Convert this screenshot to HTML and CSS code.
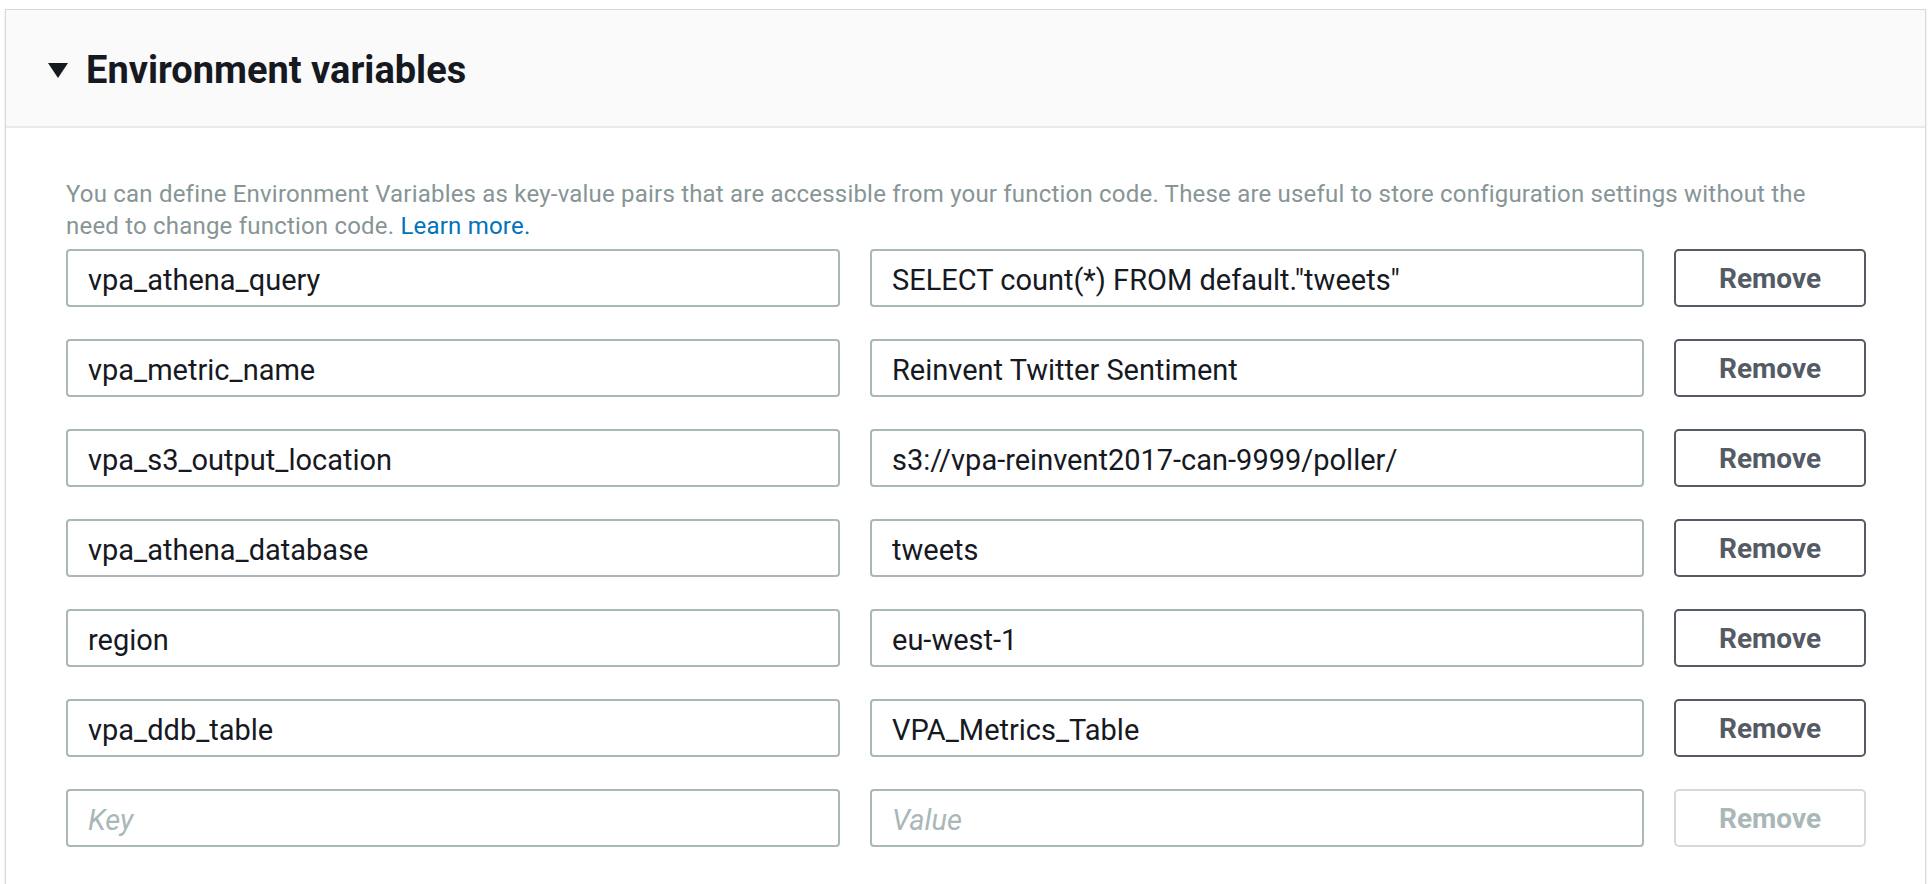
FILE: index.html
```html
<!DOCTYPE html>
<html lang="en">
<head>
<meta charset="utf-8">
<title>Environment variables</title>
<link rel="stylesheet" href="styles.css">
</head>
<body>
<section class="panel">
  <header class="panel-header">
    <svg class="caret" width="20" height="15" viewBox="0 0 20 15" aria-hidden="true"><polygon points="0,0 20,0 10,15" fill="#16191f"/></svg>
    <h2 class="panel-title">Environment variables</h2>
  </header>
  <div class="panel-body">
    <p class="desc">You can define Environment Variables as key-value pairs that are accessible from your function code. These are useful to store configuration settings without the need to change function code. <a href="#" class="link">Learn more.</a></p>
    <div class="rows">
      <div class="row">
        <input class="field" type="text" value="vpa_athena_query">
        <input class="field" type="text" value="SELECT count(*) FROM default.&quot;tweets&quot;">
        <button class="btn">Remove</button>
      </div>
      <div class="row">
        <input class="field" type="text" value="vpa_metric_name">
        <input class="field" type="text" value="Reinvent Twitter Sentiment">
        <button class="btn">Remove</button>
      </div>
      <div class="row">
        <input class="field" type="text" value="vpa_s3_output_location">
        <input class="field" type="text" value="s3://vpa-reinvent2017-can-9999/poller/">
        <button class="btn">Remove</button>
      </div>
      <div class="row">
        <input class="field" type="text" value="vpa_athena_database">
        <input class="field" type="text" value="tweets">
        <button class="btn">Remove</button>
      </div>
      <div class="row">
        <input class="field" type="text" value="region">
        <input class="field" type="text" value="eu-west-1">
        <button class="btn">Remove</button>
      </div>
      <div class="row">
        <input class="field" type="text" value="vpa_ddb_table">
        <input class="field" type="text" value="VPA_Metrics_Table">
        <button class="btn">Remove</button>
      </div>
      <div class="row">
        <input class="field" type="text" placeholder="Key">
        <input class="field" type="text" placeholder="Value">
        <button class="btn btn-disabled" disabled>Remove</button>
      </div>
    </div>
  </div>
</section>
</body>
</html>
```

FILE: styles.css
```css
* { box-sizing: border-box; }
html, body { margin: 0; padding: 0; background: #ffffff; }
body {
  font-family: Roboto, "Liberation Sans", Arial, sans-serif;
  color: #16191f;
  overflow: hidden;
  height: 884px;
}
.panel {
  margin: 9px 0 0 5px;
  width: 1921px;
  height: 900px;
  border: 1px solid #d5dbdb;
  border-bottom: none;
  background: #ffffff;
  box-shadow: 0 1px 2px rgba(0, 28, 36, 0.12);
}
.panel-header {
  height: 118px;
  background: #fafafa;
  border-bottom: 2px solid #e6eaea;
  display: flex;
  align-items: center;
  padding: 3px 0 0 42px;
}
.caret { display: block; flex: none; margin-top: 2px; }
.panel-title {
  margin: 0 0 0 18px;
  font-size: 38px;
  font-weight: 700;
  line-height: 1;
  color: #16191f;
}
.panel-body {
  padding: 50px 59px 0 60px;
}
.desc {
  margin: 0;
  max-width: 1775px;
  font-size: 24px;
  letter-spacing: 0.2px;
  line-height: 32px;
  color: #879596;
}
.link { color: #0073bb; text-decoration: none; }
.rows {
  margin-top: 7px;
  display: flex;
  flex-direction: column;
  gap: 32px;
}
.row {
  display: grid;
  grid-template-columns: 774px 774px 192px;
  column-gap: 30px;
  height: 58px;
}
.field {
  height: 58px;
  width: 100%;
  margin: 0;
  border: 2px solid #aab7b8;
  border-radius: 4px;
  padding: 3px 20px 0 20px;
  font-family: Roboto, "Liberation Sans", Arial, sans-serif;
  font-size: 29px;
  color: #16191f;
  background: #ffffff;
  outline: none;
}
.field::placeholder {
  color: #aab7b8;
  font-style: italic;
}
.btn {
  height: 58px;
  margin: 0;
  border: 2px solid #545b64;
  border-radius: 5px;
  background: #ffffff;
  font-family: Roboto, "Liberation Sans", Arial, sans-serif;
  font-size: 28px;
  font-weight: 700;
  color: #545b64;
  padding: 0;
}
.btn-disabled {
  border-color: #d5dbdb;
  color: #aab7b8;
}
```
